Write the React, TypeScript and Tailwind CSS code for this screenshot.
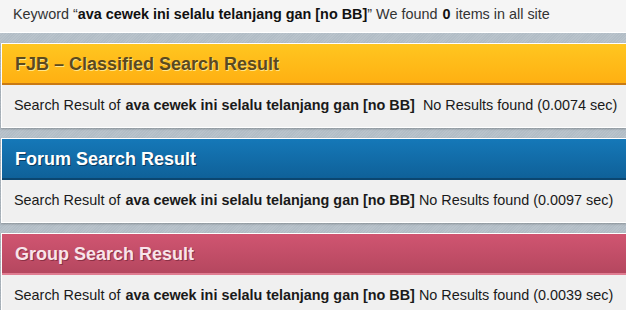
const keyword = 'ava cewek ini selalu telanjang gan [no BB]';

type Section = {
  title: string;
  time: string;
  head: string;
  titleClass: string;
  gap: string;
};

const sections: Section[] = [
  {
    title: 'FJB – Classified Search Result',
    time: '0.0074',
    head: 'bg-[linear-gradient(#ffc620,#ffb012)] border-b-[2px] border-b-[#c97a14]',
    titleClass: 'text-[#5b4a1e] [text-shadow:1px_1px_0_#ffe58a]',
    gap: 'ml-[8px]',
  },
  {
    title: 'Forum Search Result',
    time: '0.0097',
    head: 'bg-[linear-gradient(#1578b8,#0f6199)] border-b-[2px] border-b-[#0b4670]',
    titleClass: 'text-white [text-shadow:1px_1px_0_#0a3c60]',
    gap: 'ml-[4px]',
  },
  {
    title: 'Group Search Result',
    time: '0.0039',
    head: 'bg-[linear-gradient(#d05571,#b5475f)] border-b-[2px] border-b-[#e07d92]',
    titleClass: 'text-[#f8e4ea] [text-shadow:1px_1px_0_#8c3045]',
    gap: 'ml-[4px]',
  },
];

function ResultBox({ section }: { section: Section }) {
  return (
    <div className="mt-[10px] ml-px border border-white border-r-0 shadow-[0_1px_2px_rgba(0,0,0,0.25)]">
      {/* Coloured header */}
      <div className={`h-[41px] flex items-center pl-[13px] ${section.head}`}>
        <h2 className={`text-[18px] font-bold leading-none ${section.titleClass}`}>{section.title}</h2>
      </div>
      {/* Body */}
      <div className="h-[42px] flex items-center pl-[12px] bg-[#f0f0f0] text-[14.4px] text-[#1a1a1a] whitespace-nowrap">
        <span>Search Result of</span>
        <b className="ml-[5px]">{keyword}</b>
        <span className={section.gap}>No Results found ({section.time} sec)</span>
      </div>
    </div>
  );
}

export default function App() {
  return (
    <div
      className="w-[626px] h-[310px] overflow-hidden bg-[repeating-linear-gradient(135deg,#b9c3cb_0px,#b9c3cb_1px,#b2bdc6_1px,#b2bdc6_2px)] font-['Liberation_Sans',Arial,sans-serif]"
    >
      {/* Keyword summary */}
      <div className="h-[33px] flex items-center pl-[13px] pb-[3px] bg-[#f5f5f5] border-b border-white text-[14.4px] text-[#333] whitespace-nowrap">
        <span>Keyword “</span>
        <b className="text-[#111]">{keyword}</b>
        <span>” We found</span>
        <b className="ml-[5px] text-[#111]">0</b>
        <span className="ml-[5px]">items in all site</span>
      </div>

      {sections.map((s) => (
        <ResultBox key={s.title} section={s} />
      ))}
    </div>
  );
}
